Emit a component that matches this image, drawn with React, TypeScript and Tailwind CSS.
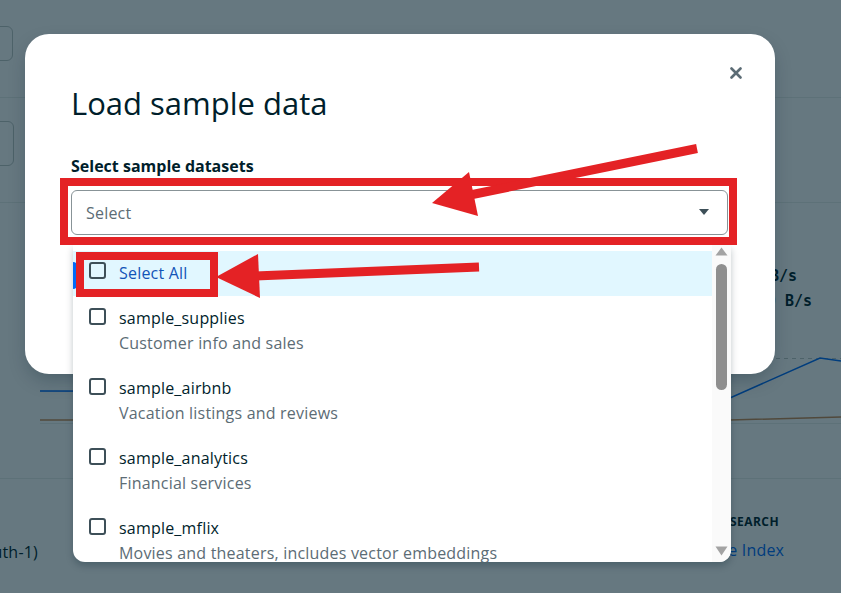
import React from "react";

const datasets = [
  { name: "sample_supplies", description: "Customer info and sales" },
  { name: "sample_airbnb", description: "Vacation listings and reviews" },
  { name: "sample_analytics", description: "Financial services" },
  { name: "sample_mflix", description: "Movies and theaters, includes vector embeddings" },
];

function Checkbox() {
  return <span className="block h-[17px] w-[17px] shrink-0 rounded-[3px] border-2 border-[#3D4F58]" />;
}

function BackgroundPage() {
  return (
    <div className="flex flex-col">
      <div className="h-[98px] border-b border-[#E8EDEB] pt-[26px]">
        <div className="-ml-[28px] h-[35px] w-[41px] rounded-[6px] border border-[#C1C7C6]" />
      </div>
      <div className="h-[105px] border-b border-[#E8EDEB] pt-[23px]">
        <div className="-ml-[26px] h-[45px] w-[40px] rounded-[6px] border border-[#C1C7C6]" />
      </div>
      <div className="flex h-[276px] flex-col border-b border-[#E8EDEB]">
        <div className="mt-[63px] flex flex-col items-end font-['DejaVu_Sans_Mono',monospace] text-[15px] font-bold leading-[20px] text-[#001E2B]">
          <span className="pr-[44px]">0 KB/s</span>
          <span className="mt-[5px] pr-[29px]">0 B/s</span>
        </div>
        <svg className="mt-[29px]" width="841" height="120" viewBox="0 0 841 120">
          <line x1="40" y1="18.5" x2="841" y2="18.5" stroke="#C1C7C6" strokeDasharray="4 4" />
          <line x1="40" y1="83.5" x2="841" y2="83.5" stroke="#E8EDEB" />
          <polyline points="40,80 730,80 841,77" fill="none" stroke="#C98A55" strokeWidth="1.5" />
          <polyline points="40,51 560,52 640,98 820,18 841,21" fill="none" stroke="#016BF8" strokeWidth="1.5" />
        </svg>
      </div>
      <div className="flex h-[114px] tracking-[0.2px]">
        <div className="mt-[63px] flex w-[38px] justify-end overflow-hidden whitespace-nowrap text-[16px] leading-[20px] text-[#001E2B]">
          AWS Mumbai (ap-south-1)
        </div>
        <div className="ml-[649px] mt-[35px] flex flex-col whitespace-nowrap">
          <span className="text-[12px] font-bold uppercase leading-[16px] tracking-[0.04em] text-[#001E2B]">Atlas Search</span>
          <span className="mt-[10px] text-[16px] leading-[20px] text-[#016BF8]">Create Index</span>
        </div>
      </div>
    </div>
  );
}

function DatasetMenu() {
  return (
    <div className="absolute left-[2px] top-[55px] flex h-[317px] w-[658px] overflow-hidden rounded-b-[12px] bg-white tracking-[0.2px] shadow-[0_4px_7px_0_rgba(0,30,43,0.25)]">
      <div className="flex flex-1 flex-col pt-[6px]">
        <div className="relative flex h-[45px] shrink-0 gap-[13px] bg-[#E1F7FF] pl-[16px] pt-[11px]">
          <span className="absolute left-0 top-[11px] h-[27px] w-[4px] rounded-r-[4px] bg-[#016BF8]" />
          <Checkbox />
          <span className="mt-px text-[16px] leading-[20px] text-[#1254B7]">Select All</span>
        </div>
        {datasets.map((d) => (
          <div key={d.name} className="flex h-[70px] shrink-0 gap-[13px] pl-[16px] pt-[12px]">
            <Checkbox />
            <div className="flex flex-col whitespace-nowrap">
              <span className="text-[16px] leading-[20px] text-[#001E2B]">{d.name}</span>
              <span className="mt-[5px] text-[16px] leading-[20px] text-[#5C6C75]">{d.description}</span>
            </div>
          </div>
        ))}
      </div>
      <div className="flex w-[19px] flex-col items-center bg-[#FAFAFA]">
        <svg className="mt-[2px]" width="13" height="9" viewBox="0 0 13 9">
          <path d="M6.5 0.5 L12.5 8.5 L0.5 8.5 Z" fill="#A3A3A3" />
        </svg>
        <div className="mt-[8px] h-[126px] w-[11px] rounded-full bg-[#8F8F8F]" />
        <div className="flex-1" />
        <svg className="mb-[6px]" width="13" height="10" viewBox="0 0 13 10">
          <path d="M0.5 0.5 L12.5 0.5 L6.5 9.5 Z" fill="#A3A3A3" />
        </svg>
      </div>
    </div>
  );
}

function Annotations() {
  const red = "#E42225";
  return (
    <svg className="pointer-events-none absolute inset-0" width="841" height="593" viewBox="0 0 841 593">
      <rect x="64" y="182" width="669" height="59" fill="none" stroke={red} strokeWidth="8" />
      <rect x="80" y="256" width="134" height="37" fill="none" stroke={red} strokeWidth="8" />
      <line x1="697" y1="148.5" x2="470" y2="195" stroke={red} strokeWidth="9" />
      <polygon points="432,203 469,172 478,216" fill={red} />
      <line x1="479" y1="267" x2="255" y2="276" stroke={red} strokeWidth="9" />
      <polygon points="216,277 258,254 260,298" fill={red} />
    </svg>
  );
}

export default function App() {
  return (
    <div className="relative h-[593px] w-[841px] overflow-hidden bg-white font-['Open_Sans',sans-serif]">
      <BackgroundPage />

      <div className="absolute inset-0 bg-[rgba(0,30,43,0.6)] pl-[25px] pt-[34px]">
        <div className="relative h-[340px] w-[750px] rounded-[24px] bg-white pl-[46px] pr-[47px] pt-[51px] shadow-[0_8px_20px_-4px_rgba(0,30,43,0.3)]">
          <button type="button" className="absolute right-[33px] top-[33px]" aria-label="Close">
            <svg width="12" height="12" viewBox="0 0 12 12">
              <path d="M1.5 1.5 L10.5 10.5 M10.5 1.5 L1.5 10.5" stroke="#5C6C75" strokeWidth="2.6" strokeLinecap="round" />
            </svg>
          </button>
          <h2 className="text-[31px] font-medium leading-[36px] text-[#001E2B]">Load sample data</h2>
          <div className="mt-[35px] text-[16px] font-bold leading-[20px] text-[#001E2B]">Select sample datasets</div>
          <div className="relative mt-[14px]">
            <div className="flex h-[45px] items-center justify-between rounded-[6px] border border-[#889397] pl-[14px] pr-[18px]">
              <span className="text-[16px] tracking-[0.2px] text-[#5C6C75]">Select</span>
              <svg width="10" height="7" viewBox="0 0 10 7">
                <path d="M0 0 L10 0 L5 6 Z" fill="#3D4F58" />
              </svg>
            </div>
            <DatasetMenu />
          </div>
        </div>
      </div>

      <Annotations />
    </div>
  );
}
